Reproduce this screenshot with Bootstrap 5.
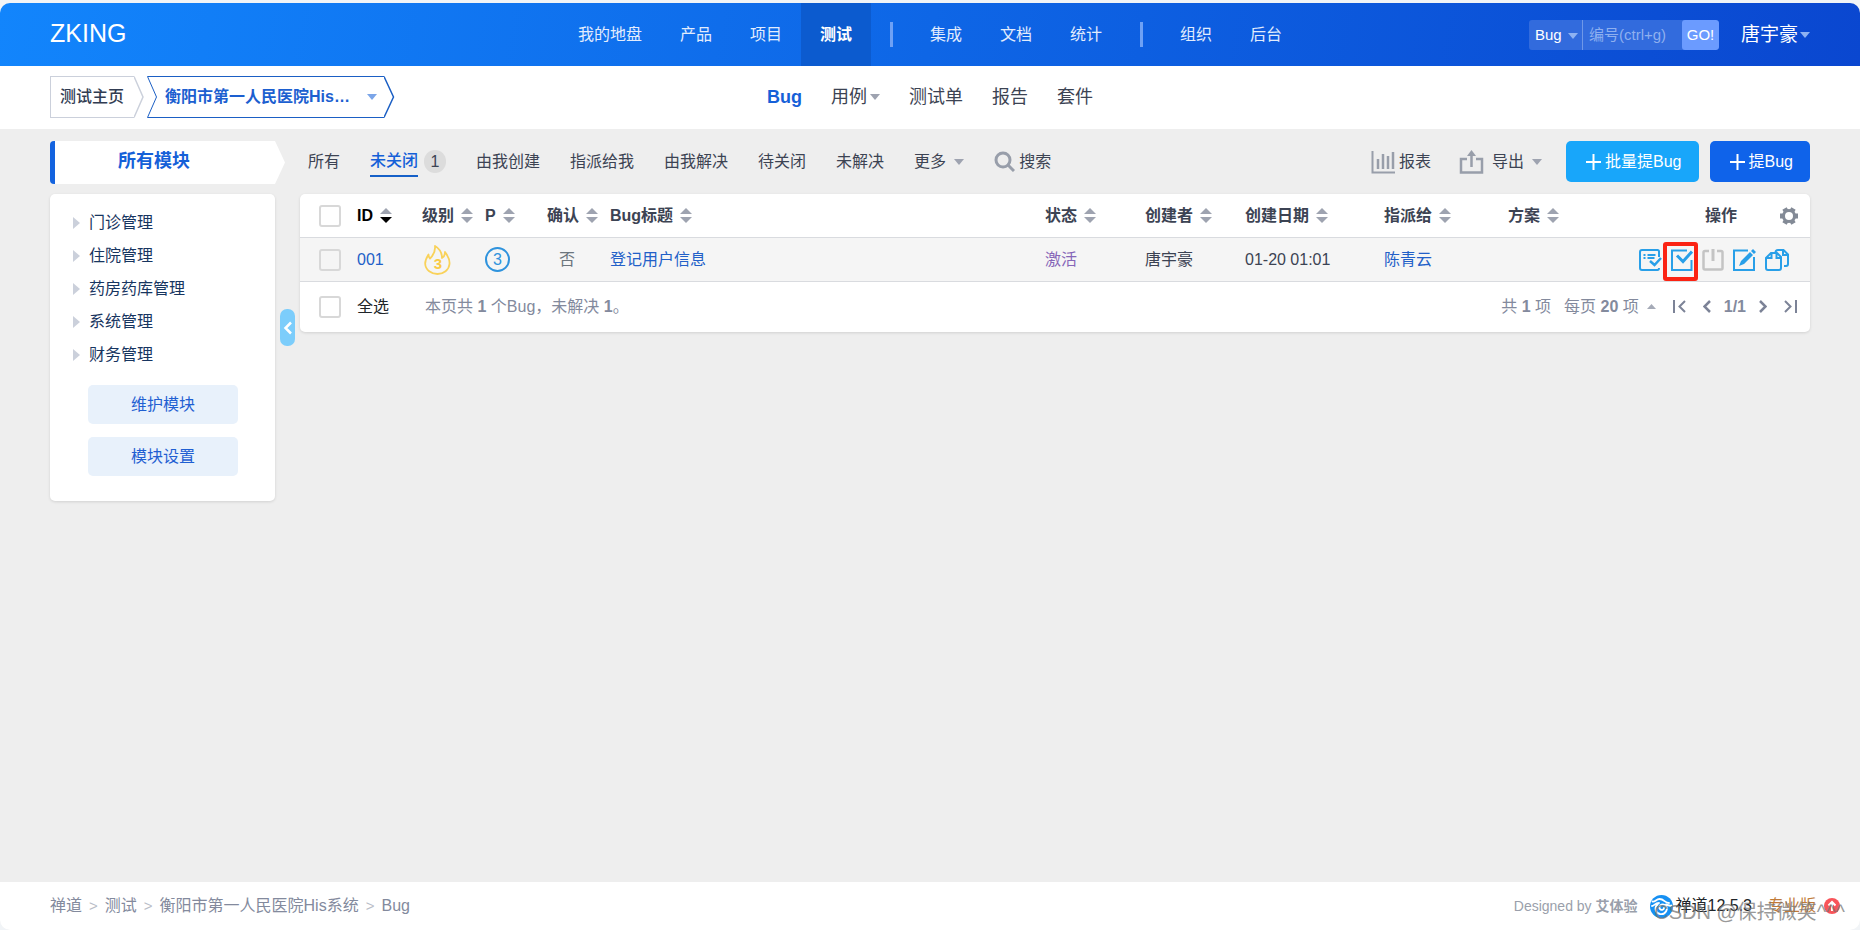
<!DOCTYPE html>
<html lang="zh-CN">
<head>
<meta charset="utf-8">
<meta name="viewport" content="width=device-width, initial-scale=1">
<title>Bug - 禅道</title>
<link href="https://cdn.jsdelivr.net/npm/bootstrap@5.3.0/dist/css/bootstrap.min.css" rel="stylesheet">
<style>
  body { background: #f1f4f7; color: #3c4353; font: 16px/24px "Liberation Sans", "Noto Sans CJK SC", sans-serif; }
  a { color: inherit; text-decoration: none; }
  svg { display: block; flex: none; }
  .shell { min-height: calc(100vh - 3px); margin-top: 3px; border-radius: 10px; background: #eee; overflow: hidden; }
  .gutter { padding-left: 50px; padding-right: 50px; }
  .side { flex: 1 1 0; }
  .arrow { display: inline-block; flex: none; border: 5px solid transparent; border-top: 6px solid #9ea3b0; border-bottom: 0; }

  .topbar { height: 63px; background: linear-gradient(100deg, #1285fc, #0a47d0); color: #fff; }
  .brand { font-size: 25px; }
  .topnav a { line-height: 63px; padding: 0 19px; color: #e2ecfd; }
  .topnav a.active { background: #0c5bcf; color: #fff; font-weight: 700; }
  .divider { width: 3px; height: 25px; margin: 0 18px 0 19px; background: #6ea1f5; }
  .finder { height: 30px; margin-right: 22px; font-size: 15px; border-radius: 3px; background: #326bdd; overflow: hidden; }
  .finder select { width: 53px; appearance: none; background: transparent; border: 0; color: #fff; padding: 0 6px; }
  .finder .pick { position: relative; border-right: 1px solid #6f98e8; }
  .finder .pick .arrow { position: absolute; right: 4px; top: 13px; pointer-events: none; }
  .finder input { width: 99px; background: transparent; border: 0; color: #fff; padding: 0 6px; }
  .finder input::placeholder { color: #8fb0ef; opacity: 1; }
  .finder button { width: 37px; padding: 0; border: 0; background: #6b9bff; color: #fff; border-radius: 3px; }
  .topbar .arrow { border-top-color: #8eb2f2; }
  .user { font-size: 19px; gap: 2px; }

  .subbar { height: 63px; background: #fff; padding-bottom: 2px; }
  .crumb { height: 42px; line-height: 40px; font-weight: 500; border: 1px solid #cbd0db; border-right: 0; width: 84px; padding-left: 9px; color: #313c52; white-space: nowrap; }
  .crumb.now { width: 227px; padding: 0 7px 0 8px; border-color: #1b5fc4; border-left: 0; color: #1c5fd0; font-weight: 700; }
  .crumb.now .arrow { border-top-color: #7ba5e8; }
  .subnav { gap: 29px; font-size: 18px; }
  .subnav .menu { gap: 3px; }
  .blue { color: #1560d8; }

  .content { padding-top: 12px; }
  .sidebar { width: 225px; margin-right: 25px; position: relative; }
  .side-title { height: 43px; width: 235px; margin-bottom: 10px; line-height: 41px; font-size: 18px; font-weight: 700; padding-right: 32px; border-left: 5px solid #1363df; border-radius: 4px 0 0 4px; background: #fff; clip-path: polygon(0 0, 225px 0, 100% 50%, 225px 100%, 0 100%); }
  .panel { background: #fff; border-radius: 5px; box-shadow: 0 1px 3px rgba(0,0,0,.12); }
  .tree { padding: 12px 0 25px; color: #173560; }
  .tree li { height: 33px; padding-left: 23px; gap: 9px; }
  .twisty { border: 6px solid transparent; border-left: 7px solid #cbd0db; border-right: 0; }
  .soft { display: block; width: 150px; height: 39px; margin: 0 0 13px 38px; border: 0; border-radius: 5px; background: #e8f1fb; color: #1f5fd2; }
  .soft:first-of-type { margin-top: 14px; }
  .toggler { position: absolute; left: 230px; top: 168px; width: 15px; height: 37px; padding: 0 0 0 3px; border: 0; border-radius: 7px; background: #7ccdfb; }

  .tools { height: 41px; margin-bottom: 12px; }
  .tabs { gap: 30px; padding-left: 8px; }
  .tabs .current { color: #1560d8; font-weight: 500; border-bottom: 2px solid #1560c8; line-height: 28px; }
  .count { width: 22px; height: 23px; margin-left: 6px; border-radius: 12px; background: #dcdcdc; line-height: 23px; text-align: center; }
  .do { height: 41px; border: 0; border-radius: 5px; color: #fff; background: #0f63ea; gap: 4px; padding: 0 17px 0 20px; }
  .do.light { background: #18a6fa; margin-right: 11px; }

  .bugs { table-layout: fixed; width: 100%; }
  .bugs th, .bugs td { padding: 1px 0 0; white-space: nowrap; vertical-align: middle; }
  .bugs th { height: 43px; color: #3c4353; }
  .bugs td { height: 44px; background: #f5f5f5; border-top: 1px solid #d9dbdf; border-bottom: 1px solid #d9dbdf; }
  .bugs th:first-child, .bugs td:first-child { padding-left: 19px; }
  .bugs th > a { display: inline-flex; align-items: center; gap: 7px; }
  .sort { display: inline-flex; flex-direction: column; gap: 3px; }
  .sort::before { content: ""; border: 6px solid transparent; border-bottom: 6px solid #9ea3b0; border-top: 0; }
  .sort::after { content: ""; border: 6px solid transparent; border-top: 6px solid #9ea3b0; border-bottom: 0; }
  .sort.down::after { border-top-color: #000; }
  .link { color: #2260c8; }
  .form-check-input { width: 22px; height: 22px; margin: 0; display: block; border: 2px solid #d8d8d8; border-radius: 3px !important; background-color: transparent; }
  .flame { margin-left: 2px; }
  .pri { width: 25px; height: 25px; border: 2px solid #2f93dd; border-radius: 50%; color: #2f93dd; line-height: 21px; text-align: center; }
  .status { color: #8666b8; }
  .acts { gap: 42px; padding-right: 11px; }
  .ops { gap: 9px; padding-right: 21px; }
  .ops button, .pages button { border: 0; background: none; padding: 0; }
  .mark-box { position: relative; }
  .mark-box::after { content: ""; position: absolute; left: -8px; top: -7px; width: 35px; height: 39px; border: 4px solid #fb2313; border-radius: 3px; }
  .foot { height: 50px; padding: 0 13px 0 19px; color: #838a9d; }
  .summary { margin-left: 36px; }
  .pages { gap: 13px; }

  .bottom { height: 48px; background: #fff; color: #838a9d; position: relative; }
  .bottom .trail { gap: 7px; }
  .bottom .trail i { font-style: normal; font-size: 15px; color: #b9bdc7; }
  .credit { font-size: 14px; color: #9a9fab; margin-right: 13px; }
  .version { margin-left: 2px; }
  .edition { color: #c07a38; }
  .stamp { position: absolute; right: 15px; top: 18px; font-size: 20px; color: #777; opacity: .75; pointer-events: none; white-space: nowrap; }
</style>
</head>
<body>
<div class="shell d-flex flex-column">
  <header class="topbar gutter d-flex align-items-center">
    <div class="side"><a class="brand" href="#">ZKING</a></div>
    <nav class="topnav d-flex align-items-center">
      <a href="#">我的地盘</a><a href="#">产品</a><a href="#">项目</a><a href="#" class="active">测试</a>
      <span class="divider"></span>
      <a href="#">集成</a><a href="#">文档</a><a href="#">统计</a>
      <span class="divider"></span>
      <a href="#">组织</a><a href="#">后台</a>
    </nav>
    <div class="side d-flex justify-content-end align-items-center">
      <form class="finder d-flex">
        <div class="pick d-flex"><select aria-label="搜索类型"><option>Bug</option></select><span class="arrow"></span></div>
        <input type="text" placeholder="编号(ctrl+g)" aria-label="编号">
        <button type="button">GO!</button>
      </form>
      <a href="#" class="user d-flex align-items-center">唐宇豪<span class="arrow"></span></a>
    </div>
  </header>

  <div class="subbar gutter d-flex align-items-center">
    <div class="side d-flex">
      <a class="crumb" href="#">测试主页</a>
      <svg width="13" height="42" fill="none" stroke="#cbd0db" stroke-width="1.5"><path d="M0 .5 9 21 0 41.5"/></svg>
      <svg width="10" height="42" fill="none" stroke="#1b5fc4"><path d="M10 .5H.5L9.500 21 .5 41.500H10"/></svg>
      <a class="crumb now d-flex align-items-center justify-content-between" href="#">衡阳市第一人民医院His…<span class="arrow"></span></a>
      <svg width="11" height="42" fill="none" stroke="#1b5fc4" stroke-width="1.5"><path d="M0 .5 9.500 21 0 41.500"/></svg>
    </div>
    <nav class="subnav d-flex">
      <a href="#" class="blue fw-bold">Bug</a>
      <a href="#" class="menu d-flex align-items-center">用例<span class="arrow"></span></a>
      <a href="#">测试单</a><a href="#">报告</a><a href="#">套件</a>
    </nav>
    <div class="side"></div>
  </div>

  <main class="content gutter d-flex flex-grow-1 align-items-start">
    <aside class="sidebar flex-shrink-0">
      <div class="side-title blue text-center">所有模块</div>
      <div class="panel tree">
        <ul class="list-unstyled m-0">
          <li class="d-flex align-items-center"><span class="twisty"></span><a href="#">门诊管理</a></li>
          <li class="d-flex align-items-center"><span class="twisty"></span><a href="#">住院管理</a></li>
          <li class="d-flex align-items-center"><span class="twisty"></span><a href="#">药房药库管理</a></li>
          <li class="d-flex align-items-center"><span class="twisty"></span><a href="#">系统管理</a></li>
          <li class="d-flex align-items-center"><span class="twisty"></span><a href="#">财务管理</a></li>
        </ul>
        <button type="button" class="soft">维护模块</button>
        <button type="button" class="soft mb-0">模块设置</button>
      </div>
      <button type="button" class="toggler" aria-label="收起"><svg width="9" height="14" fill="none" stroke="#fff" stroke-width="2.500"><path d="M8 1.500 2.500 7 8 12.500"/></svg></button>
    </aside>

    <section class="flex-grow-1">
      <div class="tools d-flex align-items-center justify-content-between">
        <nav class="tabs d-flex align-items-center">
          <a href="#">所有</a>
          <a href="#" class="d-flex align-items-center"><span class="current">未关闭</span><span class="count">1</span></a>
          <a href="#">由我创建</a><a href="#">指派给我</a><a href="#">由我解决</a><a href="#">待关闭</a><a href="#">未解决</a>
          <a href="#" class="d-flex align-items-center gap-2">更多<span class="arrow"></span></a>
          <a href="#" class="d-flex align-items-center gap-1"><svg width="21" height="21" fill="none" stroke="#989eaa" stroke-width="3"><circle cx="9" cy="9" r="7"/><path d="m14 14 6 6"/></svg>搜索</a>
        </nav>
        <div class="d-flex align-items-center">
          <a href="#" class="d-flex align-items-center gap-1 me-4"><svg width="24" height="24" fill="none" stroke="#989eaa" stroke-width="2"><path d="M1.500 1v21.500H24"/><path stroke-width="2.500" d="M7 9v10M12 4v15M17 6v13M22 2v17"/></svg>报表</a>
          <a href="#" class="d-flex align-items-center me-4 gap-2 ps-1"><svg width="25" height="24" fill="none" stroke="#989eaa" stroke-width="2.500"><path d="M8 9H2v13.500h21V9h-6M12.500 17V4"/><path d="M8 6h9l-4.500-6z" fill="#989eaa" stroke="none"/></svg>导出<span class="arrow"></span></a>
          <button type="button" class="do light d-flex align-items-center"><svg width="15" height="16" stroke="#fff" stroke-width="2"><path d="M7.500 0v16M0 8h15"/></svg>批量提Bug</button>
          <button type="button" class="do d-flex align-items-center"><svg width="15" height="16" stroke="#fff" stroke-width="2"><path d="M7.500 0v16M0 8h15"/></svg>提Bug</button>
        </div>
      </div>

      <div class="panel">
        <table class="bugs">
          <colgroup><col style="width:57px"><col style="width:65px"><col style="width:63px"><col style="width:62px"><col style="width:63px"><col><col style="width:100px"><col style="width:100px"><col style="width:139px"><col style="width:124px"><col style="width:124px"><col style="width:178px"></colgroup>
          <thead>
            <tr>
              <th><input class="form-check-input" type="checkbox" aria-label="选择全部"></th>
              <th><a href="#" class="text-black">ID<span class="sort down"></span></a></th>
              <th><a href="#">级别<span class="sort"></span></a></th>
              <th><a href="#">P<span class="sort"></span></a></th>
              <th><a href="#">确认<span class="sort"></span></a></th>
              <th><a href="#">Bug标题<span class="sort"></span></a></th>
              <th><a href="#">状态<span class="sort"></span></a></th>
              <th><a href="#">创建者<span class="sort"></span></a></th>
              <th><a href="#">创建日期<span class="sort"></span></a></th>
              <th><a href="#">指派给<span class="sort"></span></a></th>
              <th><a href="#">方案<span class="sort"></span></a></th>
              <th><div class="acts d-flex justify-content-end align-items-center">操作<svg width="20" height="18" viewBox="-10 -9 20 18"><path stroke="#838a96" stroke-width="5" stroke-linejoin="round" d="M-9 0H9M-4.500-7.500l9 15M4.500-7.500l-9 15"/><circle r="5.500" fill="#fff" stroke="#838a96" stroke-width="3"/></svg></div></th>
            </tr>
          </thead>
          <tbody>
            <tr>
              <td><input class="form-check-input" type="checkbox" aria-label="选择 001"></td>
              <td><a href="#" class="link">001</a></td>
              <td><svg class="flame" width="27" height="30" viewBox="0 0 27 30"><path fill="none" stroke="#f9d25a" stroke-width="1.800" stroke-linejoin="round" d="M11 1c5 3 7 7 7 12 2-1 3-3 3-6 3 4 5 7 4.500 12C25 25 19.500 29 13.500 29S1.500 25 1.200 19C1 15 3 12 4.500 9.500c0 2 .5 3 1.500 4C9.500 10 11.500 6 11 1z"/><text x="14" y="24" text-anchor="middle" font-size="15" font-weight="700" fill="#f9cb45">3</text></svg></td>
              <td><div class="pri">3</div></td>
              <td class="text-secondary"><span class="ms-2 ps-1">否</span></td>
              <td><a href="#" class="link">登记用户信息</a></td>
              <td class="status">激活</td>
              <td>唐宇豪</td>
              <td>01-20 01:01</td>
              <td><a href="#" class="link">陈青云</a></td>
              <td></td>
              <td>
                <div class="ops d-flex justify-content-end">
                  <button type="button" aria-label="确认"><svg width="23" height="22" fill="none" stroke="#289fe8" stroke-width="2"><path d="M20 8V2.500Q20 1 18.500 1H3Q1 1 1 3v16q0 2 2 2h15.500q1.500 0 1.500-2"/><path d="M4.500 6h2m2 0h8M4.500 9h2m2 0h7"/><path stroke-width="2.500" d="m11 12 4.500 4L22 9"/></svg></button>
                  <button type="button" class="mark-box" aria-label="解决"><svg width="22" height="22" fill="none" stroke="#289fe8" stroke-width="2"><path d="M16 1.500H1V21h19.500v-10"/><path stroke-width="3" d="m6 6.500 6 6L21 2.500"/></svg></button>
                  <button type="button" aria-label="关闭"><svg width="22" height="22" fill="none" stroke="#c4c4c4" stroke-width="2.500"><path d="M7 2H3Q1.500 2 1.500 3.500V19q0 1.500 1.500 1.500h16q1.500 0 1.500-1.500V3.500Q20.500 2 19 2h-4"/><path stroke-width="3" d="M11 0v12"/></svg></button>
                  <button type="button" aria-label="编辑"><svg width="23" height="22" fill="none" stroke="#289fe8" stroke-width="2"><path d="M15 1.500H1V21h20V8"/><path fill="#289fe8" stroke="none" d="M6 17 8 12 17 3l3 3-9 9zM18 2l2-2 3 3-2 2z"/></svg></button>
                  <button type="button" aria-label="复制"><svg width="24" height="22" fill="none" stroke="#289fe8" stroke-width="2"><path d="M6 4h6l4 4v11q0 2-2 2H3q-2 0-2-2V9zM6.500 4v5H1M11.500 4v5H16"/><path d="M10.500 3.500Q10.500 1 13 1h5.500l4.500 4.500V15q0 2-2 2h-2M18 1v5h5"/></svg></button>
                </div>
              </td>
            </tr>
          </tbody>
        </table>
        <div class="foot d-flex align-items-center">
          <input class="form-check-input" type="checkbox" id="all">
          <label for="all" class="ms-3 text-dark">全选</label>
          <span class="summary">本页共 <b>1</b> 个Bug，未解决 <b>1</b>。</span>
          <div class="pages ms-auto d-flex align-items-center">
            <span>共 <b>1</b> 项</span>
            <a href="#" class="d-flex align-items-center gap-2 me-1"><span>每页 <b>20</b> 项</span><svg width="9" height="5" fill="#a5aab7"><path d="M0 5h9L4.500 0z"/></svg></a>
            <button type="button" class="me-1" aria-label="首页"><svg width="13" height="13" fill="none" stroke="#7c8397" stroke-width="2"><path d="M1 0v13M12 1 6.500 6.500 12 12"/></svg></button>
            <button type="button" aria-label="上一页"><svg width="8" height="13" fill="none" stroke="#7c8397" stroke-width="2.500"><path d="M7 1 1.500 6.500 7 12"/></svg></button>
            <b>1/1</b>
            <button type="button" class="me-1" aria-label="下一页"><svg width="8" height="13" fill="none" stroke="#7c8397" stroke-width="2.500"><path d="m1 1 5.500 5.500L1 12"/></svg></button>
            <button type="button" aria-label="末页"><svg width="13" height="13" fill="none" stroke="#7c8397" stroke-width="2"><path d="M12 0v13M1 1l5.500 5.500L1 12"/></svg></button>
          </div>
        </div>
      </div>
    </section>
  </main>

  <footer class="bottom d-flex align-items-center justify-content-between">
    <div class="trail gutter d-flex"><a href="#">禅道</a><i>&gt;</i><a href="#">测试</a><i>&gt;</i><a href="#">衡阳市第一人民医院His系统</a><i>&gt;</i><span>Bug</span></div>
    <div class="d-flex align-items-center pe-3 me-1">
      <span class="credit">Designed by <b>艾体验</b></span>
      <svg width="23" height="23" viewBox="0 0 23 23"><circle cx="11.500" cy="11.500" r="11.500" fill="#1690f3"/><path fill="none" stroke="#fff" stroke-width="1.800" stroke-linecap="round" d="M2.500 6.500c3 .5 3.500-2.500 7-2.500 5 0 5 4 9.500 4M2 11c2 0 3-3 7-3M8 9c-4 3-3 9 2 10 6 1 9-6 5-9-4-2-7 2-5 4 1 1.500 4 1 4-1M16 9.500c2 0 3 2 5.500 1"/></svg>
      <a href="#" class="version text-dark">禅道12.5.3</a>
      <a href="#" class="edition ms-3 me-2">专业版</a>
      <svg width="16" height="16"><circle cx="8" cy="8" r="8" fill="#f8545a"/><path d="M8 13V5M4.500 7.500 8 4l3.500 3.500" fill="none" stroke="#fff" stroke-width="2"/></svg>
    </div>
    <span class="stamp">CSDN @保持微笑^^^</span>
  </footer>
</div>
<script src="https://cdn.jsdelivr.net/npm/bootstrap@5.3.0/dist/js/bootstrap.bundle.min.js"></script>
</body>
</html>
